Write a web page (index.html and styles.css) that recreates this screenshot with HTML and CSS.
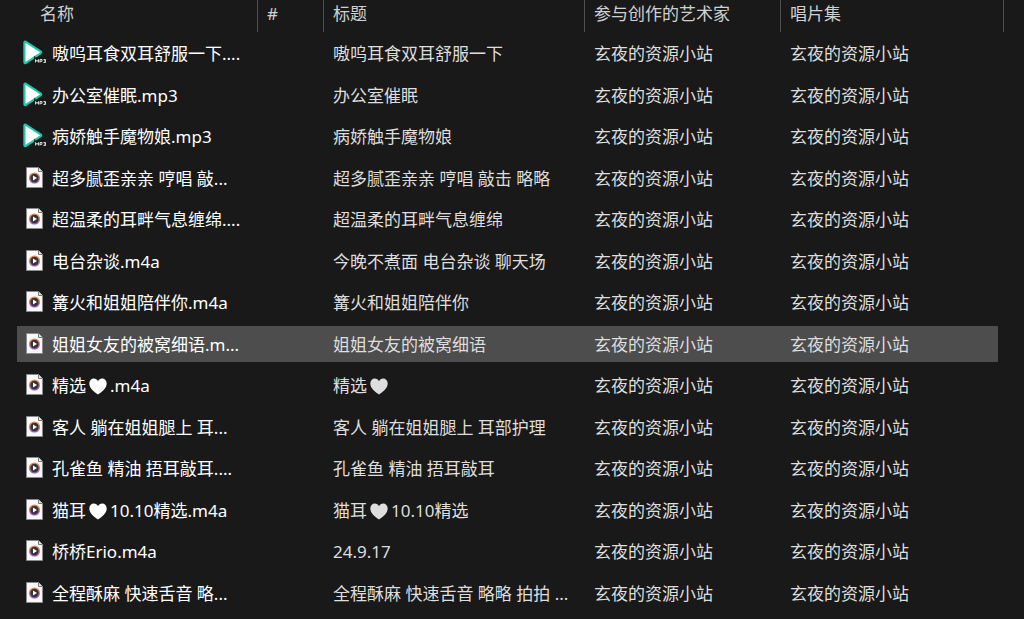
FILE: index.html
```html
<!DOCTYPE html>
<html lang="zh-CN">
<head>
<meta charset="utf-8">
<meta name="viewport" content="width=device-width, initial-scale=1">
<title>音频文件</title>
<link rel="stylesheet" href="styles.css">
</head>
<body>
<svg class="defs" aria-hidden="true">
  <defs>
    <linearGradient id="ring" x1="0" y1="0" x2="0" y2="1">
      <stop offset="0" stop-color="#ef8a4c"/>
      <stop offset="0.5" stop-color="#c98a80"/>
      <stop offset="1" stop-color="#8b55b8"/>
    </linearGradient>
    <symbol id="mp3" viewBox="0 0 24 26">
      <path d="M1.4 2.6Q1.4 1 2.9 1.8L17.500 11.300Q18.900 12.200 17.500 13.300L2.9 22.9Q1.4 23.6 1.4 22Z" fill="#fff" stroke="#1fc9a9" stroke-width="2.200" stroke-linejoin="round"/>
      <path d="M12.500 22.500V19.500L14 21.500L15.500 19.500V22.500M17 22.500V19.500H19V21.300H17M20.500 19.500H22.500V22.500H20.500M21 21H22.500" fill="none" stroke="#191919" stroke-width="2.600"/>
      <path d="M12.500 22.500V19.500L14 21.500L15.500 19.500V22.500M17 22.500V19.500H19V21.300H17M20.500 19.500H22.500V22.500H20.500M21 21H22.500" fill="none" stroke="#d8d8d8" stroke-width="1"/>
    </symbol>
    <symbol id="m4a" viewBox="0 0 24 26">
      <path d="M3.500 2.500H15.500L19.500 6.500V22.500H3.500Z" fill="#f8f8f8" stroke="#8b8b8b"/>
      <path d="M15.500 2.500V6.500H19.500" fill="#e4e4e4" stroke="#777"/>
      <circle cx="11.500" cy="13" r="4.900" fill="#353238" stroke="url(#ring)" stroke-width="1.400"/>
      <path d="M10 10.500V15.500L14 13Z" fill="#fff"/>
    </symbol>
    <symbol id="heart" viewBox="0 0 18 17">
      <path d="M9 16.500C5.500 14 .300 10.500 .300 5.500C.300 2.500 2.300 .500 4.800 .500C6.700 .500 8.200 1.500 9 3.200C9.800 1.500 11.300 .500 13.200 .500C15.700 .500 17.700 2.500 17.700 5.500C17.700 10.500 12.500 14 9 16.500Z" fill="currentColor"/>
    </symbol>
  </defs>
</svg>
<table class="files">
  <colgroup><col class="c-name"><col class="c-num"><col class="c-title"><col class="c-artist"><col></colgroup>
  <thead>
    <tr><th scope="col">名称</th><th scope="col">#</th><th scope="col">标题</th><th scope="col">参与创作的艺术家</th><th scope="col">唱片集</th></tr>
  </thead>
  <tbody>
    <tr><td><svg class="icon"><use href="#mp3"/></svg>嗷呜耳食双耳舒服一下....</td><td></td><td>嗷呜耳食双耳舒服一下</td><td>玄夜的资源小站</td><td>玄夜的资源小站</td></tr>
    <tr><td><svg class="icon"><use href="#mp3"/></svg>办公室催眠.mp3</td><td></td><td>办公室催眠</td><td>玄夜的资源小站</td><td>玄夜的资源小站</td></tr>
    <tr><td><svg class="icon"><use href="#mp3"/></svg>病娇触手魔物娘.mp3</td><td></td><td>病娇触手魔物娘</td><td>玄夜的资源小站</td><td>玄夜的资源小站</td></tr>
    <tr><td><svg class="icon"><use href="#m4a"/></svg>超多腻歪亲亲 哼唱 敲...</td><td></td><td>超多腻歪亲亲 哼唱 敲击 略略</td><td>玄夜的资源小站</td><td>玄夜的资源小站</td></tr>
    <tr><td><svg class="icon"><use href="#m4a"/></svg>超温柔的耳畔气息缠绵....</td><td></td><td>超温柔的耳畔气息缠绵</td><td>玄夜的资源小站</td><td>玄夜的资源小站</td></tr>
    <tr><td><svg class="icon"><use href="#m4a"/></svg>电台杂谈.m4a</td><td></td><td>今晚不煮面 电台杂谈 聊天场</td><td>玄夜的资源小站</td><td>玄夜的资源小站</td></tr>
    <tr><td><svg class="icon"><use href="#m4a"/></svg>篝火和姐姐陪伴你.m4a</td><td></td><td>篝火和姐姐陪伴你</td><td>玄夜的资源小站</td><td>玄夜的资源小站</td></tr>
    <tr class="selected"><td><svg class="icon"><use href="#m4a"/></svg>姐姐女友的被窝细语.m...</td><td></td><td>姐姐女友的被窝细语</td><td>玄夜的资源小站</td><td>玄夜的资源小站</td></tr>
    <tr><td><svg class="icon"><use href="#m4a"/></svg>精选<svg class="heart"><use href="#heart"/></svg>.m4a</td><td></td><td>精选<svg class="heart"><use href="#heart"/></svg></td><td>玄夜的资源小站</td><td>玄夜的资源小站</td></tr>
    <tr><td><svg class="icon"><use href="#m4a"/></svg>客人 躺在姐姐腿上 耳...</td><td></td><td>客人 躺在姐姐腿上 耳部护理</td><td>玄夜的资源小站</td><td>玄夜的资源小站</td></tr>
    <tr><td><svg class="icon"><use href="#m4a"/></svg>孔雀鱼 精油 捂耳敲耳....</td><td></td><td>孔雀鱼 精油 捂耳敲耳</td><td>玄夜的资源小站</td><td>玄夜的资源小站</td></tr>
    <tr><td><svg class="icon"><use href="#m4a"/></svg>猫耳<svg class="heart"><use href="#heart"/></svg>10.10精选.m4a</td><td></td><td>猫耳<svg class="heart"><use href="#heart"/></svg>10.10精选</td><td>玄夜的资源小站</td><td>玄夜的资源小站</td></tr>
    <tr><td><svg class="icon"><use href="#m4a"/></svg>桥桥Erio.m4a</td><td></td><td>24.9.17</td><td>玄夜的资源小站</td><td>玄夜的资源小站</td></tr>
    <tr><td><svg class="icon"><use href="#m4a"/></svg>全程酥麻 快速舌音 略...</td><td></td><td>全程酥麻 快速舌音 略略 拍拍 ...</td><td>玄夜的资源小站</td><td>玄夜的资源小站</td></tr>
  </tbody>
</table>
</body>
</html>
```

FILE: styles.css
```css
* {
  box-sizing: border-box;
}

body {
  margin: 0;
  padding: 0 20px 0 17px;
  background: #191919;
  color: #dedede;
  font-family: "Noto Sans", "Noto Sans CJK SC", sans-serif;
  font-size: 17px;
  line-height: 24px;
}

.defs {
  position: absolute;
  width: 0;
  height: 0;
}

.files {
  width: 100%;
  table-layout: fixed;
  border-collapse: separate;
  border-spacing: 0;
}

.c-name {
  width: 241px;
}

.c-num {
  width: 66px;
}

.c-title {
  width: 261px;
}

.c-artist {
  width: 196px;
}

th {
  height: 32px;
  padding: 0 0 4px 9px;
  border-right: 1px solid #505050;
  color: #d0d0d0;
  font-weight: 400;
  text-align: left;
  white-space: nowrap;
}

th:first-child {
  padding-left: 23px;
}

td {
  height: 42px;
  padding: 1px 0 0 9px;
  border: 0 solid transparent;
  border-width: 3px 0 2px;
  background-clip: padding-box;
  white-space: nowrap;
}

tr:nth-child(even) td {
  height: 41px;
}

td:first-child {
  padding-left: 6px;
  color: #fff;
}

td:last-child {
  border-right-width: 6px;
}

.selected td {
  background-color: #4d4d4d;
}

.selected td:first-child {
  border-radius: 2px 0 0 2px;
}

.selected td:last-child {
  border-radius: 0 2px 2px 0;
}

.icon {
  width: 24px;
  height: 26px;
  margin: -2px 5px -2px 0;
  vertical-align: -4px;
}

.heart {
  width: 18px;
  height: 17px;
  margin: 0 3px;
  vertical-align: -3px;
}
```
